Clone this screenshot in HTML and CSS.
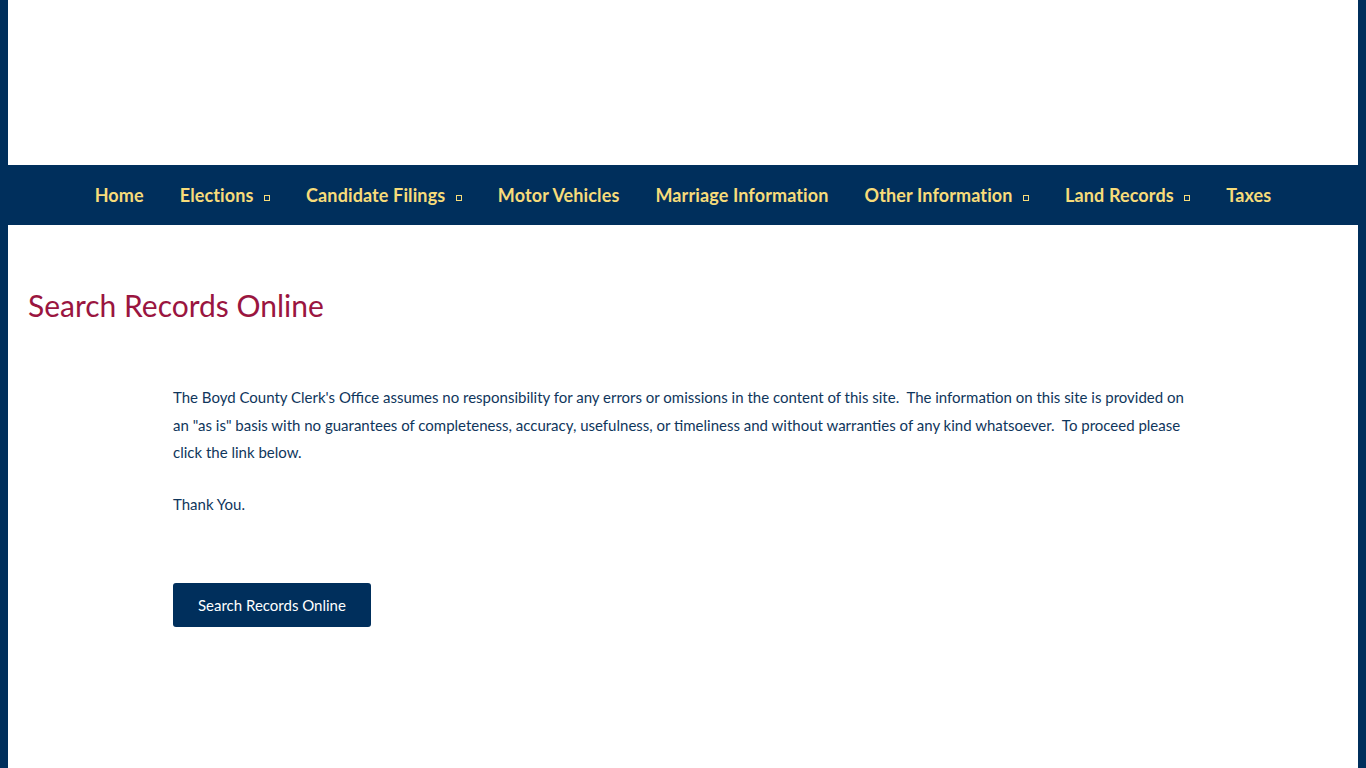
FILE: index.html
```html
<!DOCTYPE html>
<html lang="en">
<head>
    <meta charset="UTF-8">
    <meta name="viewport" content="width=device-width, initial-scale=1.0">
    <title>Search Records Online - Boyd County Clerk</title>
    <link rel="stylesheet" href="styles.css">
</head>
<body>

    <div class="page">
        <header class="site-header"></header>

        <nav class="main-nav">
            <ul>
                <li><a href="#">Home</a></li>
                <li><a href="#">Elections <span class="caret"></span></a></li>
                <li><a href="#">Candidate Filings <span class="caret"></span></a></li>
                <li><a href="#">Motor Vehicles</a></li>
                <li><a href="#">Marriage Information</a></li>
                <li><a href="#">Other Information <span class="caret"></span></a></li>
                <li><a href="#">Land Records <span class="caret"></span></a></li>
                <li><a href="#">Taxes</a></li>
            </ul>
        </nav>

        <main class="content">
            <h1 class="page-title">Search Records Online</h1>

            <div class="disclaimer">
                <p>The Boyd County Clerk's Office assumes no responsibility for any errors or omissions in the content of this site.&nbsp; The information on this site is provided on an "as is" basis with no guarantees of completeness, accuracy, usefulness, or timeliness and without warranties of any kind whatsoever.&nbsp; To proceed please click the link below.</p>
                <p>Thank You.</p>

                <a class="search-btn" href="#">Search Records Online</a>
            </div>
        </main>
    </div>

</body>
</html>
```

FILE: styles.css
```css
html, body {
    margin: 0;
    padding: 0;
}

body {
    background-color: #002f5c;
    font-family: "Lato", "Noto Sans", sans-serif;
    color: #0f365c;
}

.page {
    margin: 0 8px;
    background-color: #fff;
    min-height: 768px;
}

.site-header {
    height: 165px;
}

.main-nav {
    background-color: #002f5c;
    margin: 0 -8px;
}

.main-nav ul {
    list-style: none;
    margin: 0;
    padding: 0;
    height: 60px;
    display: flex;
    justify-content: center;
    align-items: center;
}

.main-nav a {
    display: block;
    padding: 0 18px;
    color: #f7dc7a;
    font-size: 18px;
    font-weight: bold;
    letter-spacing: 0.12px;
    text-decoration: none;
}

.caret {
    display: inline-block;
    width: 4px;
    height: 4px;
    border: 1px solid #f7dc7a;
    margin-left: 6px;
    vertical-align: middle;
    position: relative;
    top: 1px;
}

.content {
    padding: 60px 20px 100px;
}

.page-title {
    margin: 0;
    font-size: 30px;
    font-weight: normal;
    color: #9a1540;
    line-height: 40px;
}

.disclaimer {
    width: 1020px;
    margin: 59px auto 0;
    font-size: 15px;
    line-height: 27.5px;
}

.disclaimer p {
    margin: 0 0 24px;
}

.search-btn {
    display: inline-block;
    margin-top: 41px;
    padding: 0 25px;
    height: 44px;
    line-height: 44px;
    border-radius: 3px;
    background-color: #002f5c;
    color: #fff;
    font-size: 15px;
    text-decoration: none;
}
```
